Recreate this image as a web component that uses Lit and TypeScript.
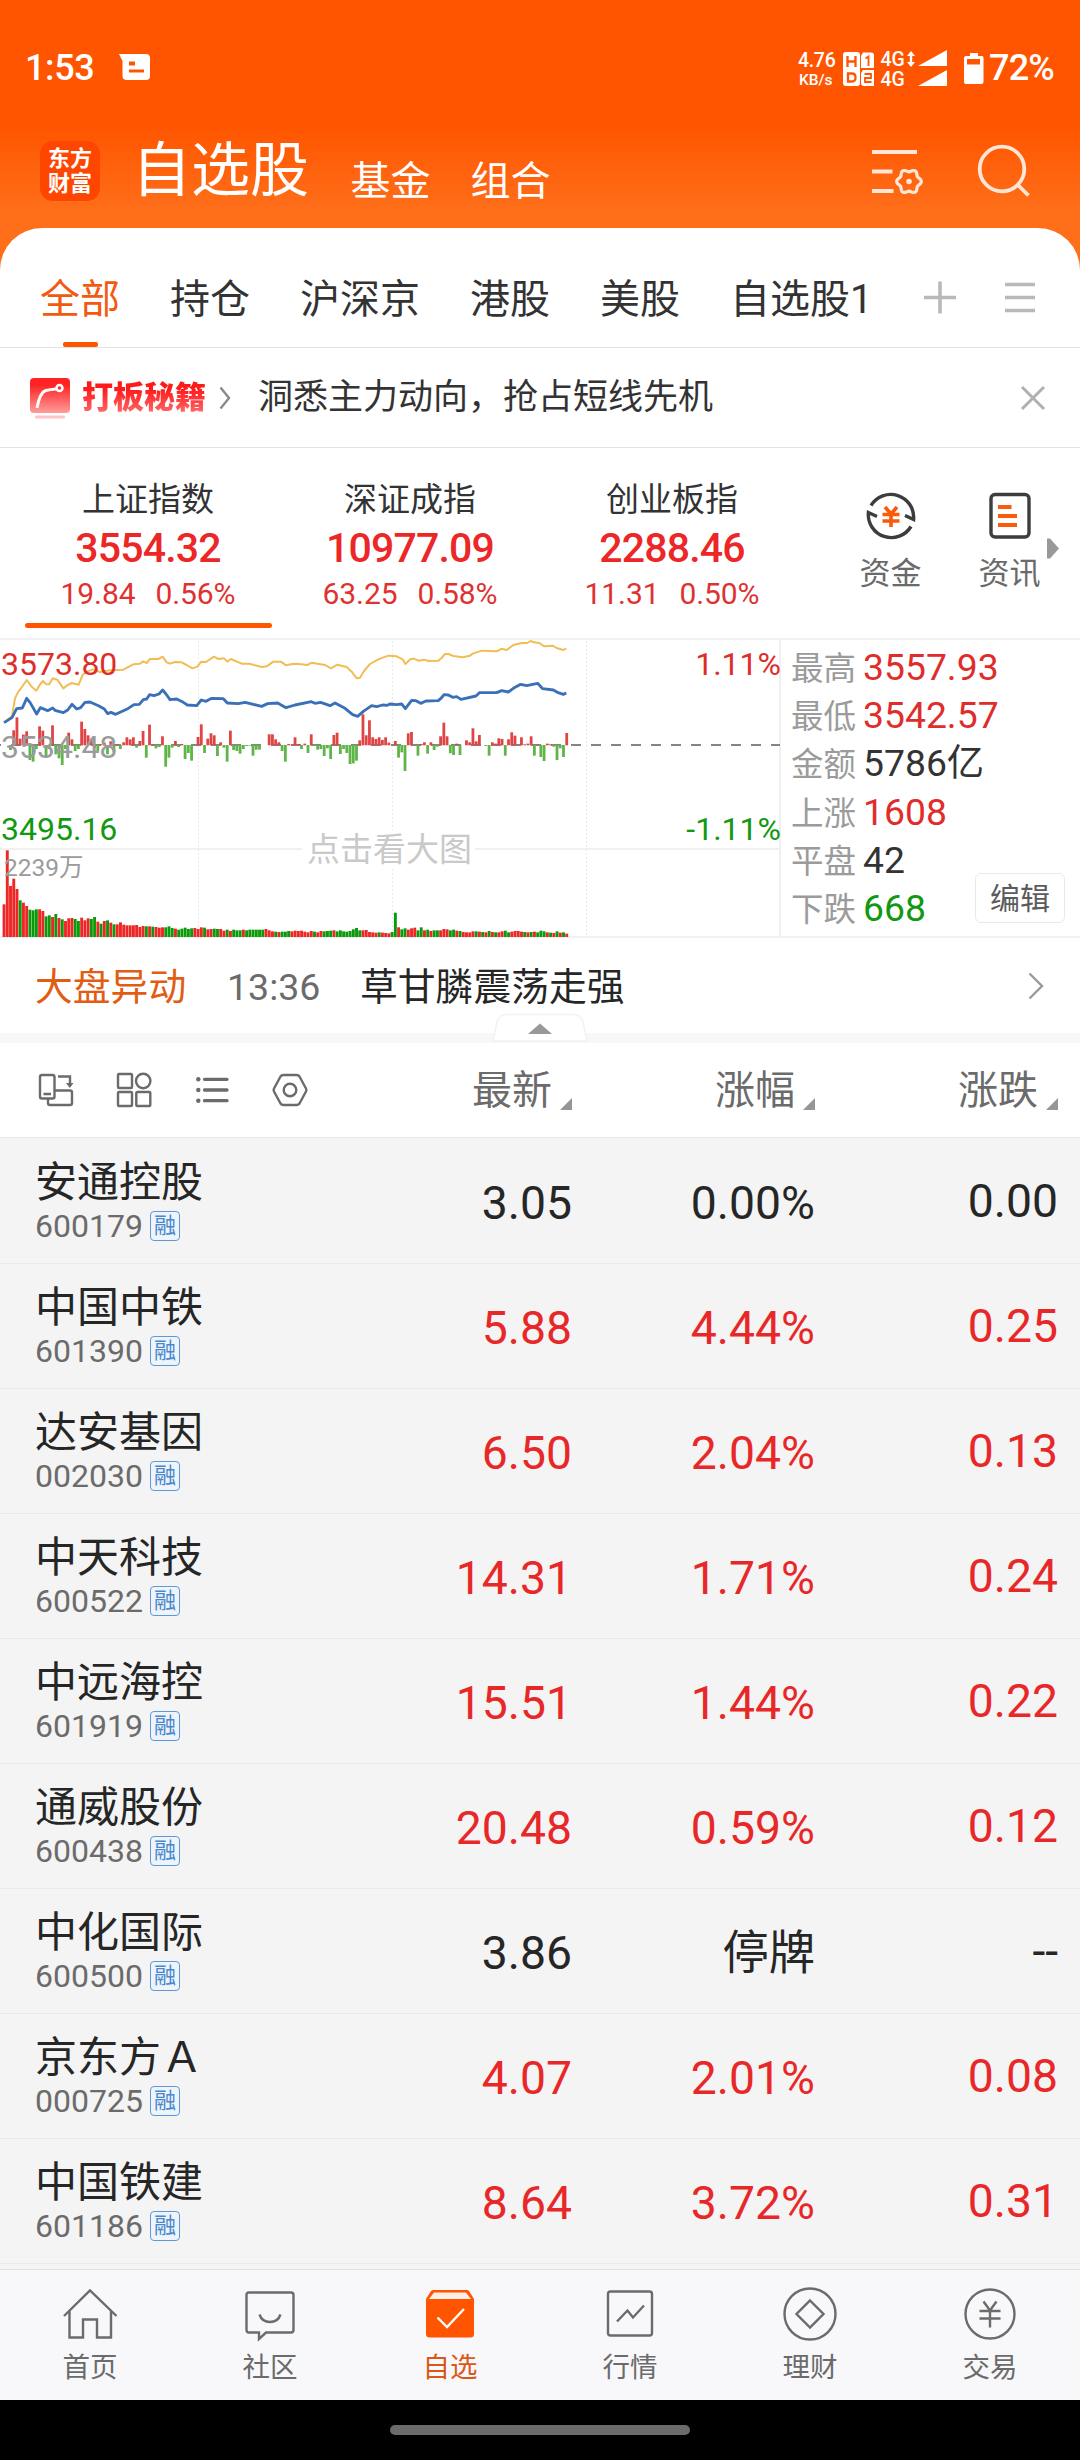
import { LitElement, html, svg, css } from "lit";
import { customElement, property } from "lit/decorators.js";
import { classMap } from "lit/directives/class-map.js";

/* Minute bars of the day: net flow around the base line, in thirds of a pixel. */
const FLOW: number[] = [
  0, 0, -15, 45, 84, 20, 32, 42, -45, -50, -12, 57, 44, -35, -12, 60, -28, -40, -60, -12,
  38, 18, -18, -12, 71, 49, 30, 20, -10, -18, 3, 8, -28, 12, -20, 3, -12, 9, 24, 18,
  24, -8, 13, 43, -38, 62, 2, -10, -6, 27, -65, -38, -8, 13, -6, 4, -42, -24, -47, 0,
  25, 63, -24, 20, 36, 30, -33, 9, -8, -50, 44, -15, -18, -26, -12, -3, -2, -32, -14, -14,
  0, 0, 33, 33, 18, 9, -18, -50, 4, 2, 24, 4, -12, 5, -24, 33, -3, -14, -12, -33,
  -10, -42, 31, 38, -27, -12, -24, -57, -55, -47, 15, 93, 30, 75, 24, 19, 24, 16, 24, 8,
  0, 13, -38, -22, -78, 36, 40, 0, -32, 4, 9, -26, 9, -15, -5, 27, 68, 27, -25, -30,
  5, -30, 0, 15, 9, 51, 12, 31, 0, -3, -32, 9, 5, 21, 19, -32, 18, 39, 29, 0,
  24, 3, 5, 27, -32, 2, -36, -48, 5, 3, -5, -45, -10, -36, 37,
];

/* Volume per minute; a negative number is a falling minute. */
const VOLUME: number[] = [
  98, 260, 153, 175, 144, -110, 103, 93, -82, -80, -83, 83, 78, -62, -65, 60, -69, 57, -53, 48,
  56, 57, -54, -48, 58, 50, 56, -54, -60, 46, -40, 48, -50, 43, -38, 38, 44, 37, 35, 35,
  35, 36, 30, 33, -32, 32, -31, 30, 28, 29, -29, -32, -27, 25, -22, -25, -28, -24, -26, 27,
  24, 29, -28, 23, 24, -25, -24, 24, 19, -22, 18, -22, -20, -20, 22, -20, -22, -22, -22, -22,
  -22, 24, 20, 17, -16, 15, -16, -16, -18, 17, 19, 18, 19, 16, 14, 18, -16, 14, 18, -17,
  -18, -19, 20, -17, -20, -17, -16, -18, -23, -27, -20, 20, 21, 15, 14, 13, -14, 13, 12, 11,
  -15, -73, 29, -23, -26, 22, 26, 28, -20, -29, 20, -22, 18, -20, -20, 20, 24, 23, -20, -22,
  19, -18, 15, 14, 14, 17, -17, 16, -15, 14, -18, 15, -14, 14, 17, -19, -14, 16, 18, 18,
  16, -15, 14, -15, 16, -14, -19, -17, 14, -13, 12, -17, 13, -14, 10,
];

const AVERAGE =
  "12,278 36,258 45,205 55,185 68,168 80,150 95,170 109,182 119,165 129,153 139,163 148,163 158,145 172,149 190,175 203,165 215,159 236,164 248,135 260,125 280,118 300,126 330,121 370,119 400,103 420,101 430,94 440,99 450,87 475,87 488,80 500,97 510,101 525,96 545,97 560,105 577,115 592,110 604,95 618,96 642,80 655,87 672,85 682,95 692,87 725,101 748,101 785,111 800,109 820,95 843,95 858,106 878,102 890,101 922,105 935,98 975,105 993,115 1012,104 1040,111 1055,125 1070,145 1080,143 1092,123 1110,102 1135,88 1165,77 1190,79 1208,88 1216,102 1232,87 1242,86 1255,92 1273,89 1285,93 1315,92 1325,84 1335,72 1345,72 1360,78 1388,82 1410,77 1418,71 1445,62 1490,64 1505,56 1520,60 1540,45 1565,39 1582,39 1592,33 1602,37 1618,39 1633,49 1658,47 1670,54 1690,60 1699,55";
const INDEX =
  "12,278 36,263 50,236 67,234 80,205 90,217 110,252 121,233 143,242 158,234 165,241 190,248 203,240 216,223 230,237 242,233 255,217 270,216 297,228 313,237 323,251 333,247 347,253 380,238 402,224 418,223 430,209 440,207 449,194 462,197 477,192 488,180 498,192 510,209 530,207 550,217 562,225 590,227 604,210 618,214 635,205 670,206 682,219 715,221 735,217 785,229 803,221 833,219 858,233 885,225 934,215 945,220 962,217 990,227 1005,219 1035,235 1058,254 1073,259 1090,244 1115,227 1130,230 1148,225 1162,226 1170,222 1190,224 1205,222 1216,236 1235,211 1248,212 1262,220 1278,213 1315,212 1325,203 1332,194 1345,195 1358,202 1370,200 1383,208 1428,198 1438,188 1490,188 1505,182 1525,186 1540,175 1562,163 1580,167 1613,160 1628,176 1660,180 1672,187 1690,193 1699,189";

@customElement("market-chart")
export class MarketChart extends LitElement {
  static styles = css`
    :host { display: block; width: 782px; height: 300px; }
    .chart { display: block; width: 782px; height: 300px; font-family: Roboto, "Noto Sans CJK SC", sans-serif; }
    .grid { stroke: #f0f0f0; stroke-width: 2; }
    .dots { stroke: #e9e9e9; stroke-width: 1; stroke-dasharray: 2 2; }
    .up { fill: #e04545; }
    .down { fill: #5fb548; }
    .buy { fill: #ed2626; }
    .sell { fill: #0c9a0c; }
    .base { stroke: #858585; stroke-width: 2; stroke-dasharray: 10 10; }
    .avg { fill: none; stroke: #f2bd55; stroke-width: 6; stroke-linejoin: round; }
    .idx { fill: none; stroke: #3a70b8; stroke-width: 8.5; stroke-linejoin: round; }
    .label { font-size: 32px; }
    .red { fill: #de2d2b; }
    .green { fill: #129812; }
    .grey { fill: #9b9b9b; }
    .small { font-size: 24.5px; }
    .hint { font-size: 33px; fill: #c9c9c9; }
    .end { text-anchor: end; }
    .patch { fill: #fff; }
  `;
  render() {
    const x = (i: number) => 2.6 + i * 3.234;
    return html`<svg class="chart" viewBox="0 638 782 300">
      <line class="grid" x1="0" y1="639" x2="782" y2="639" />
      <line class="grid" x1="780" y1="639" x2="780" y2="937" />
      <line class="grid" x1="0" y1="849" x2="780" y2="849" />
      <line class="grid" x1="0" y1="937" x2="782" y2="937" />
      ${[198.5, 392.5, 586.5].map((v) => svg`<line class="dots" x1=${v} y1="641" x2=${v} y2="936" />`)}
      <rect class="patch" x="302" y="830" width="173" height="38" />
      <text class="hint" x="307" y="860.5">点击看大图</text>
      <text class="label green" x="1" y="839.5">3495.16</text>
      <text class="label green end" x="781" y="839.5">-1.11%</text>
      <text class="label red end" x="781" y="675">1.11%</text>
      <line class="base" x1="-9" y1="745" x2="780" y2="745" />
      ${FLOW.map((h, i) =>
        h === 0 ? "" : svg`<rect class=${h > 0 ? "up" : "down"} x=${x(i)} width="2.8"
          y=${h > 0 ? 745.3 - h / 3 : 745} height=${Math.abs(h) / 3} />`)}
      ${VOLUME.map((h, i) => svg`<rect class=${h > 0 ? "buy" : "sell"} x=${x(i)} width="2.9"
          y=${937 - Math.abs(h) / 3} height=${Math.abs(h) / 3} />`)}
      <g transform="translate(0 630) scale(.33333)">
        <polyline class="avg" points=${AVERAGE} />
        <polyline class="idx" points=${INDEX} />
      </g>
      <text class="label red" x="1" y="675">3573.80</text>
      <text class="label grey" x="1" y="757.5">3534.48</text>
      <text class="small grey" x="4" y="876">2239万</text>
    </svg>`;
  }
}

interface Stock { name: string; code: string; last: string; pct: string; chg: string; flat?: boolean; }

@customElement("stock-row")
export class StockRow extends LitElement {
  @property({ attribute: false }) stock!: Stock;
  static styles = css`
    :host { display: block; }
    .row { display: flex; height: 124px; border-bottom: 1px solid #eaeaea; color: #e82828; font-size: 46.3px; }
    .flat { color: #262626; }
    .title { width: 372px; padding: 17px 0 0 35px; box-sizing: border-box; }
    .name { font-size: 42px; line-height: 54px; color: #262626; white-space: nowrap; }
    .meta { display: flex; align-items: center; gap: 7px; font-size: 32px; line-height: 32px; height: 32px; color: #6b6b6b; }
    .tag { width: 30px; height: 30px; box-sizing: border-box; border: 1.5px solid #5f98d4; border-radius: 4px; background: #edf4fb; color: #4a88cc; font-size: 22px; line-height: 28px; text-align: center; }
    .num { line-height: 129px; text-align: right; white-space: nowrap; }
    .last { width: 200px; }
    .pct { width: 243px; }
    .chg { width: 243px; line-height: 124px; }
  `;
  render() {
    const s = this.stock;
    return html`<div class=${classMap({ row: true, flat: !!s.flat })}>
      <div class="title">
        <div class="name">${s.name}</div>
        <div class="meta"><span>${s.code}</span><span class="tag">融</span></div>
      </div>
      <div class="num last">${s.last}</div>
      <div class="num pct">${s.pct}</div>
      <div class="num chg">${s.chg}</div>
    </div>`;
  }
}

const STOCKS: Stock[] = [
  { name: "安通控股", code: "600179", last: "3.05", pct: "0.00%", chg: "0.00", flat: true },
  { name: "中国中铁", code: "601390", last: "5.88", pct: "4.44%", chg: "0.25" },
  { name: "达安基因", code: "002030", last: "6.50", pct: "2.04%", chg: "0.13" },
  { name: "中天科技", code: "600522", last: "14.31", pct: "1.71%", chg: "0.24" },
  { name: "中远海控", code: "601919", last: "15.51", pct: "1.44%", chg: "0.22" },
  { name: "通威股份", code: "600438", last: "20.48", pct: "0.59%", chg: "0.12" },
  { name: "中化国际", code: "600500", last: "3.86", pct: "停牌", chg: "--", flat: true },
  { name: "京东方Ａ", code: "000725", last: "4.07", pct: "2.01%", chg: "0.08" },
  { name: "中国铁建", code: "601186", last: "8.64", pct: "3.72%", chg: "0.31" },
];

const INDICES = [
  { name: "上证指数", value: "3554.32", diff: "19.84", pct: "0.56%", on: true },
  { name: "深证成指", value: "10977.09", diff: "63.25", pct: "0.58%", on: false },
  { name: "创业板指", value: "2288.46", diff: "11.31", pct: "0.50%", on: false },
];

const STATS = [
  ["最高", "3557.93", "rise"],
  ["最低", "3542.57", "rise"],
  ["金额", "5786亿", ""],
  ["上涨", "1608", "rise"],
  ["平盘", "42", ""],
  ["下跌", "668", "fall"],
];

/* Outline of the six-lobed gear in the heading. */
const GEAR = Array.from({ length: 72 }, (_, i) => {
  const a = (i * Math.PI) / 36;
  const r = 11 + 1.3 * Math.cos(6 * a);
  return `${(909 + r * Math.cos(a)).toFixed(2)},${(181.5 + r * Math.sin(a)).toFixed(2)}`;
}).join(" ");

const NAV = [
  { label: "首页", icon: svg`<path d="M4 33 30 7.500 56.500 33M9.500 28V54.500H23V36.500H37V54.500H51V28" />` },
  { label: "社区", icon: svg`<path d="M9 9.500H51Q53.500 9.500 53.500 12V47Q53.500 49.500 51 49.500H26L19 56V49.500H9Q6.500 49.500 6.500 47V12Q6.500 9.500 9 9.500ZM19.500 31.500Q22 39 30 39Q38 39 40.500 31.500" />` },
  { label: "自选", on: true, icon: svg`<path class="solid" d="M6 16 11 8Q12 7 13 7H47Q48 7 49 8L54 16V51Q54 54.500 50.500 54.500H9.500Q6 54.500 6 51Z" /><path class="lid" d="M14 9.500H46L51 16H9Z" /><path class="tick" d="M17.500 34.500 27 44 44 26" />` },
  { label: "行情", icon: svg`<rect x="8" y="8.500" width="44" height="44" rx="2.500" /><path d="M17 38.500 27.500 27.500 33 34.500 44 22.500" />` },
  { label: "理财", icon: svg`<circle cx="30" cy="31" r="25.500" /><path d="M30 17.500 43.500 31 30 44.500 16.500 31Z" />` },
  { label: "交易", icon: svg`<circle cx="30" cy="31" r="24.500" /><path d="M23.500 18.500 30 27.500 36.500 18.500M30 27.500V44.500M19.500 28H40.500M19.500 35.500H40.500" />` },
];

@customElement("app-root")
export class AppRoot extends LitElement {
  static styles = css`
    :host { display: block; width: 1080px; height: 2460px; overflow: hidden; background: #fff; color: #333; font-family: Roboto, "Noto Sans CJK SC", sans-serif; }
    svg { display: block; flex: none; }
    .page { display: flex; flex-direction: column; height: 2460px; }
    .top { height: 228px; padding-bottom: 42px; margin-bottom: -42px; background: linear-gradient(#ff5500 0 126px, #ff6e19 210px, #ff6e19); color: #fff; flex: none; }
    .status { display: flex; height: 88px; padding: 24px 26px 0 25px; align-items: center; font-size: 36px; font-weight: 500; line-height: 88px; box-sizing: content-box; }
    .clock { width: 94px; letter-spacing: -.4px; height: 88px; }
    .message { margin-top: -2px; }
    .spacer { flex: 1; }
    .speed { width: 45px; font-size: 19.500px; line-height: 22px; text-align: left; padding-top: 1px; letter-spacing: -.3px; }
    .unit { font-size: 15.500px; line-height: 16px; padding-left: 1px; letter-spacing: 0; }
    .sysicons { width: 144px; height: 56px; }
    .sysicons text { fill: #fff; }
    .pct { height: 88px; letter-spacing: -.8px; margin-left: 2px; }
    .heading { display: flex; height: 116px; padding-left: 40px; align-items: center; }
    .logo { width: 60px; height: 60px; padding: 5px 7px; box-sizing: border-box; border-radius: 13px; background: #ff4600; display: grid; grid-template-columns: 22px 22px; justify-content: center; align-content: center; font-size: 22px; line-height: 25px; font-weight: 700; margin-top: 2px; }
    .h1 { font-size: 59px; line-height: 80px; margin-left: 32px; margin-top: 2px; }
    .h2 { font-size: 40px; line-height: 60px; margin-top: 23px; margin-left: 41.500px; }
    .h2 + .h2 { margin-left: 40px; }
    .soft { fill: none; stroke: #ffe6d6; stroke-width: 3.800; margin-top: 2px; }
    .card { flex: none; background: #fff; border-radius: 42px 42px 0 0; height: 910px; }
    .tabs { display: flex; height: 120px; padding: 0 0 0 40px; gap: 50px; box-sizing: border-box; font-size: 40px; line-height: 144px; border-bottom: 1px solid #e3e3e3; }
    .tab.on { color: #f25a10; display: flex; flex-direction: column; align-items: center; }
    .tab.on::after { content: ""; width: 35px; height: 5px; border-radius: 2px; background: #ff5500; margin-top: -30px; }
    .tabicons { stroke: #b9b9b9; stroke-width: 3.600; fill: none; margin-left: 2px; }
    .promo { display: flex; align-items: center; height: 99px; border-bottom: 1px solid #e3e3e3; padding-left: 29px; }
    .promo-name { width: 126px; margin-left: 11px; font-size: 31px; font-weight: 900; line-height: 60px; background: linear-gradient(#ff1a1a 35%, #ff6868 75%); -webkit-background-clip: text; color: transparent; white-space: nowrap; }
    .promo-chevron { margin-left: 11px; }
    .promo-text { font-size: 35px; margin-left: 27px; line-height: 60px; width: 740px; }
    .promo-close { margin-left: 22px; }
    .indices { display: flex; height: 190px; padding-left: 17px; box-sizing: border-box; }
    .index { width: 262px; display: flex; flex-direction: column; align-items: center; }
    .iname { font-size: 33px; line-height: 46px; margin-top: 29px; }
    .ivalue { font-size: 41px; font-weight: 500; line-height: 50px; color: #eb2727; letter-spacing: -.8px; }
    .idiff { display: flex; gap: 20px; font-size: 30px; line-height: 40px; margin-top: 1px; color: #de3232; letter-spacing: -.1px; }
    .bar { width: 247px; height: 5px; border-radius: 3px; background: #ff5500; margin-top: 9px; }
    .quick { display: flex; flex-direction: column; align-items: center; width: 119px; font-size: 31px; color: #6a6a6a; padding-top: 41px; }
    .quick span { line-height: 44px; margin-top: 9px; }
    .quicks { display: flex; margin-left: 28px; }
    .arrow { margin: 90px 0 0 -23px; }
    .market { display: flex; height: 300px; }
    .stats { width: 298px; box-sizing: border-box; border-top: 2px solid #f0f0f0; border-bottom: 2px solid #f0f0f0; padding: 2.500px 0 0 9px; position: relative; }
    .stat { display: flex; gap: 7px; align-items: baseline; line-height: 48.400px; height: 48.400px; font-size: 32.500px; color: #9b9b9b; }
    .stat b { font-weight: 400; font-size: 37.300px; color: #333; }
    .stat b.rise { color: #e02d2b; }
    .stat b.fall { color: #129812; }
    .edit { position: absolute; left: 193px; top: 233px; width: 90px; height: 50px; border: 1px solid #e9e9e9; border-radius: 6px; box-sizing: border-box; background: #fff; color: #5c5c5c; font-size: 30px; line-height: 49px; text-align: center; }
    .alert { display: flex; align-items: center; height: 95px; padding-left: 35px; font-size: 37.800px; line-height: 95px; }
    .alert-kind { color: #e25c12; width: 192px; padding-top: 3px; }
    .alert-time { color: #6b6b6b; width: 133px; font-size: 37.500px; padding-top: 3px; }
    .alert-text { color: #262626; width: 668px; padding-top: 3px; }
    .band { position: relative; height: 10px; background: #f5f7f9; }
    .pull { position: absolute; left: 492px; top: -21px; }
    .tools { display: flex; height: 95px; box-sizing: border-box; border-bottom: 1px solid #e7e7e7; padding-left: 36px; }
    .toolicons { stroke: #6b6b6b; stroke-width: 2.400; fill: none; }
    .toolicons .fill { fill: #6b6b6b; stroke: none; }
    .th { display: flex; justify-content: flex-end; width: 243px; font-size: 40px; line-height: 96px; height: 94px; color: #6b6b6b; gap: 8px; }
    .th:first-of-type { width: 200px; }
    .th i { width: 0; height: 0; border-left: 12px solid transparent; border-bottom: 12.500px solid #95959a; margin-top: 55px; }
    .list { height: 1131px; padding-top: 1px; box-sizing: border-box; flex: none; background: #f4f4f4; }
    .nav { display: flex; height: 131px; flex: none; box-sizing: border-box; border-top: 1px solid #dfdfdf; background: #f8f8fa; }
    .item { width: 180px; display: flex; flex-direction: column; align-items: center; padding-top: 13px; color: #6b6b6b; font-size: 27.500px; line-height: 40px; }
    .item svg { fill: none; stroke: #6b6b6b; stroke-width: 2.400; }
    .item.on { color: #d9591a; }
    .item .solid { fill: #ff5500; stroke: none; }
    .item .lid { fill: #fdeee6; stroke: none; }
    .item .tick { stroke: #fff; }
    .item span { margin-top: 3px; }
    .home { height: 60px; background: #000; flex: none; display: flex; align-items: center; justify-content: center; }
    .pill { width: 300px; height: 10px; border-radius: 5px; background: #6b6b6b; }
  `;

  renderTop() {
    return html`<div class="top">
      <div class="status">
        <div class="clock">1:53</div>
        <svg class="message" width="31" height="26" viewBox="0 0 31 26">
          <path fill="#fff" fill-rule="evenodd" d="M0 0H27Q31 0 31 4V22Q31 26 27 26H8Q3.500 26 3.500 22V7ZM10 7.500V11.500H16V7.500ZM10 15.500V18.500H25V15.500Z" />
        </svg>
        <div class="spacer"></div>
        <div class="speed">4.76<div class="unit">KB/s</div></div>
        <svg class="sysicons" viewBox="844 38 144 56" font-weight="500">
          <rect x="844" y="50" width="17" height="34" rx="3" fill="#fff" />
          <path d="M864 50.500H872Q875 50.500 875 53.500V66H862V54ZM864 68H875V84H865Q862 84 862 81V71Z" fill="#fff" />
          <path d="M848.500 54V65M856.500 54V65M848.500 59.500H856.500M849 71.500H853Q856.500 71.500 856.500 75.500Q856.500 79.500 853 79.500H849Z" stroke="#ff5500" stroke-width="2.300" fill="none" />
          <path d="M866.500 56.500 869.500 54.500V64M865.500 72H872V76H866V80H872.500" stroke="#ff5500" stroke-width="1.800" fill="none" />
          <text x="881.500" y="64" font-size="19.500">4G</text>
          <text x="881.500" y="84" font-size="19.500">4G</text>
          <path d="M912 49 916 54H913.200V57H910.800V54H908ZM912 65 916 60H913.200V57H910.800V60H908ZM948 48V64H919ZM948 68V84H919Z" fill="#fff" />
          <path d="M971 51H979V54H983Q984.500 54 984.500 56V80Q984.500 82 982.500 82H967Q965 82 965 80V56Q965 54 967 54H971ZM968 57V62.500H981V57Z" fill="#fff" fill-rule="evenodd" />
        </svg>
        <div class="pct">72%</div>
      </div>
      <div class="heading">
        <div class="logo"><span>东</span><span>方</span><span>财</span><span>富</span></div>
        <div class="h1">自选股</div>
        <div class="h2">基金</div>
        <div class="h2">组合</div>
        <div class="spacer"></div>
        <svg class="soft" width="212" height="60" viewBox="868 141 212 60">
          <path d="M872 152H917M872 171.500H892.500M872 191H893.500" />
          <polygon stroke-width="3.200" stroke-linejoin="round" points=${GEAR} />
          <circle cx="909" cy="181.500" r="2.800" fill="#ffe6d6" stroke="none" />
          <circle cx="1002" cy="169" r="22.300" /><path d="M1017.500 184.500 1028.500 195.500" />
        </svg>
      </div>
    </div>`;
  }

  render() {
    return html`<div class="page">
      ${this.renderTop()}
      <div class="card">
        <div class="tabs">
          ${["全部", "持仓", "沪深京", "港股", "美股", "自选股1"].map(
            (t, i) => html`<div class=${classMap({ tab: true, on: i === 0 })}>${t}</div>`)}
          <svg class="tabicons" width="120" height="118" viewBox="924 228 120 118">
            <path d="M924 297.500H956M940 281.500V313.500M1005 284.500H1035M1005 297.500H1035M1005 310.500H1035" />
          </svg>
        </div>
        <div class="promo">
          <svg width="42" height="42" viewBox="29 376 42 42">
            <defs><linearGradient id="pg" x1="0" y1="0" x2="0" y2="1"><stop offset=".2" stop-color="#ff2323" /><stop offset="1" stop-color="#ff9c9c" /></linearGradient></defs>
            <rect x="30" y="377" width="40" height="35" rx="4" fill="url(#pg)" />
            <rect x="35" y="414.500" width="30" height="3" rx="1" fill="#ffc4c4" />
            <path d="M37 407Q40 391 46 389.500Q50 388.500 56 388" stroke="#fff" stroke-width="3" fill="none" /><circle cx="59.500" cy="387" r="3" stroke="#fff" stroke-width="2.500" fill="none" />
          </svg>
          <div class="promo-name">打板秘籍</div>
          <svg class="promo-chevron" width="12" height="24" viewBox="0 0 12 24"><path d="M1.500 1.500 10 12 1.500 22.500" fill="none" stroke="#8a8a8a" stroke-width="2.400" /></svg>
          <div class="promo-text">洞悉主力动向，抢占短线先机</div>
          <svg class="promo-close" width="26" height="26" viewBox="0 0 26 26"><path d="M2 2 24 24M24 2 2 24" stroke="#b0b0b0" stroke-width="3" /></svg>
        </div>
        <div class="indices">
          ${INDICES.map((x) => html`<div class="index">
            <div class="iname">${x.name}</div><div class="ivalue">${x.value}</div>
            <div class="idiff"><span>${x.diff}</span><span>${x.pct}</span></div>
            ${x.on ? html`<div class="bar"></div>` : ""}
          </div>`)}
          <div class="quicks">
            <div class="quick">
              <svg width="54" height="54" viewBox="-27 -27 54 54" fill="none" stroke="#3d3d3d" stroke-width="3.400">
                <path d="M-20-10.500A23 23 0 0 1 22.600 3.500L14 -.5M20 10.500A23 23 0 0 1-22.600-3.500L-14 .5" />
                <path d="M-6-9 0-2 6-9M0-2V11M-8.500-1.500H8.500M-8.500 5H8.500" stroke="#fa5a0a" stroke-width="3.600" />
              </svg>
              <span>资金</span>
            </div>
            <div class="quick">
              <svg width="54" height="54" viewBox="-27 -27 54 54" fill="none" stroke="#3d3d3d" stroke-width="3.400">
                <rect x="-19" y="-21.500" width="38" height="42.500" rx="4" />
                <path d="M-12-9H1.500M-12 0H7M-12 9H7" stroke="#fa5a0a" stroke-width="3.800" />
              </svg>
              <span>资讯</span>
            </div>
            <svg class="arrow" width="14" height="21" viewBox="0 0 14 21"><path d="M1 .5H4L13 10.500 4 20.500H1Z" fill="#999" /></svg>
          </div>
        </div>
        <div class="market">
          <market-chart></market-chart>
          <div class="stats">
            ${STATS.map(([k, v, c]) => html`<div class="stat">${k}<b class=${c}>${v}</b></div>`)}
            <div class="edit">编辑</div>
          </div>
        </div>
        <div class="alert">
          <div class="alert-kind">大盘异动</div><div class="alert-time">13:36</div>
          <div class="alert-text">草甘膦震荡走强</div>
          <svg width="16" height="28" viewBox="0 0 16 28"><path d="M1.500 1.500 14 14 1.500 26.500" fill="none" stroke="#999" stroke-width="2.400" /></svg>
        </div>
        <div class="band">
          <svg class="pull" width="96" height="30" viewBox="492 1012 96 30">
            <path d="M493 1041 497 1022Q499 1014.500 507 1014.500H573Q581 1014.500 583 1022L587 1041Z" fill="#fff" stroke="#f1f2f4" stroke-width="1.500" />
            <path d="M528 1034 540 1023.500 552 1034Z" fill="#999" />
          </svg>
        </div>
        <div class="tools">
          <svg class="toolicons" width="336" height="94" viewBox="36 1043 336 94">
            <path d="M42 1075H52.500Q54.500 1075 54.500 1077V1096.500Q54.500 1098.500 52.500 1098.500H42Q40 1098.500 40 1096.500V1077Q40 1075 42 1075ZM43.500 1094H51M54.500 1090.500H70Q72 1090.500 72 1092.500V1103Q72 1105 70 1105H50Q48 1105 48 1103V1099M58 1076.500H70V1086" />
            <path class="fill" d="M66 1083H73.500L69.800 1088Z" />
            <rect x="118" y="1074" width="14" height="14" rx="1" /><circle cx="143.200" cy="1081" r="7.200" />
            <rect x="118" y="1092" width="14" height="14" rx="1" /><rect x="136.300" y="1092" width="14" height="14" rx="1" />
            <path d="M204.500 1079.300H227M204.500 1090H227M204.500 1100.700H227" stroke-width="3.300" stroke-linecap="round" />
            <circle class="fill" cx="198.300" cy="1079.300" r="2.200" /><circle class="fill" cx="198.300" cy="1090" r="2.200" /><circle class="fill" cx="198.300" cy="1100.700" r="2.200" />
            <path d="M283.500 1075H296.500Q298.500 1075 299.500 1076.500L306 1088.500Q306.800 1090 306 1091.500L299.500 1103.500Q298.500 1105 296.500 1105H283.500Q281.500 1105 280.500 1103.500L274 1091.500Q273.200 1090 274 1088.500L280.500 1076.500Q281.500 1075 283.500 1075Z" /><circle cx="290" cy="1090" r="6.300" />
          </svg>
          <div class="th">最新<i></i></div><div class="th">涨幅<i></i></div><div class="th">涨跌<i></i></div>
        </div>
      </div>
      <div class="list">${STOCKS.map((s) => html`<stock-row .stock=${s}></stock-row>`)}</div>
      <div class="nav">
        ${NAV.map((n) => html`<div class=${classMap({ item: true, on: !!n.on })}>
          <svg width="60" height="62" viewBox="0 0 60 62">${n.icon}</svg><span>${n.label}</span></div>`)}
      </div>
      <div class="home"><div class="pill"></div></div>
    </div>`;
  }
}
